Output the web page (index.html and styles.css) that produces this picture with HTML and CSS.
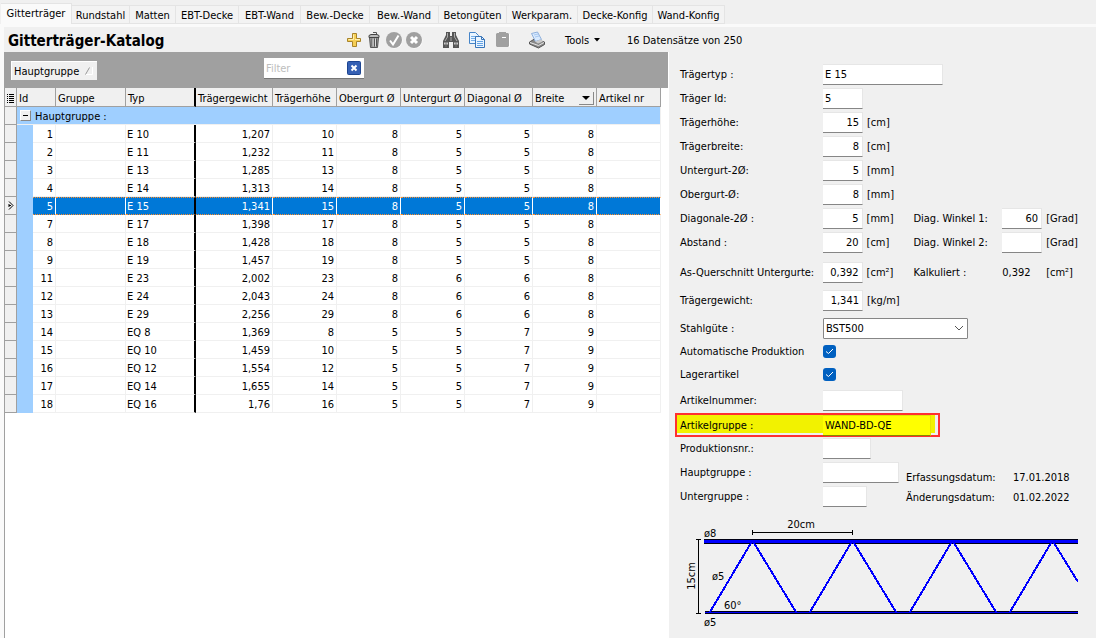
FILE: index.html
```html
<!DOCTYPE html>
<html lang="de">
<head>
<meta charset="utf-8">
<title>Gitterträger-Katalog</title>
<link rel="stylesheet" href="styles.css">
</head>
<body>
<nav class="tabs">
  <button class="tab tab-active">Gitterträger</button>
  <button class="tab w-58">Rundstahl</button>
  <button class="tab w-46">Matten</button>
  <button class="tab w-63">EBT-Decke</button>
  <button class="tab w-62">EBT-Wand</button>
  <button class="tab w-69">Bew.-Decke</button>
  <button class="tab w-69">Bew.-Wand</button>
  <button class="tab w-68">Betongüten</button>
  <button class="tab w-71">Werkparam.</button>
  <button class="tab w-75">Decke-Konfig</button>
  <button class="tab w-72">Wand-Konfig</button>
</nav>
<div class="page">
  <header class="toolbar">
    <h1 class="title">Gitterträger-Katalog</h1>
    <div class="tools">
      <button class="icon" aria-label="Neu"><svg width="16" height="16" viewBox="0 0 16 16"><path d="M6.500 1.500h4v5h4v3h-4v5h-4v-5H1.500v-3h5z" fill="#f6cf55" stroke="#a8842a"/><path d="M7.500 2.500v5h-5M9 7.500h5" fill="none" stroke="#fff0b0"/></svg></button>
      <button class="icon" aria-label="Löschen"><svg width="16" height="16" viewBox="0 0 16 16"><path d="M7 .5h3.500v2" fill="none" stroke="#555"/><path d="M3.500 5.500h9l-1 10h-7z" fill="#999" stroke="#555"/><path d="M3 3.500l2-1h6l2 1v2H3z" fill="#bbb" stroke="#444"/><path d="M6 6.500v8M8.500 6.500v8M10.500 6.500v8" stroke="#555"/><path d="M7 6.500v8M9.500 6.500v8" stroke="#ddd"/></svg></button>
      <button class="icon" aria-label="Speichern"><svg width="18" height="18" viewBox="0 0 18 18"><circle cx="9.500" cy="9.500" r="8" fill="#fff"/><circle cx="9" cy="9" r="8" fill="#a0a0a0"/><path d="M5 9.500l3 4 5.500-9" fill="none" stroke="#fff" stroke-width="2"/></svg></button>
      <button class="icon" aria-label="Abbrechen"><svg width="18" height="18" viewBox="0 0 18 18"><circle cx="9.500" cy="9.500" r="8" fill="#fff"/><circle cx="9" cy="9" r="8" fill="#a0a0a0"/><path d="M6 6l6 6M12 6l-6 6" fill="none" stroke="#fff" stroke-width="3"/></svg></button>
      <button class="icon icon-find" aria-label="Suchen"><svg width="18" height="16" viewBox="0 0 18 16"><path d="M4 0h4v4h2V0h4v3l3 6v7h-6v-6H7v6H1V9l3-6z" fill="#555"/><path d="M5.500 1v4L3 9M12.500 1v4l2.500 4M8 6h2M8 8h2" fill="none" stroke="#aaa"/><path d="M2 11.500h4M12 11.500h4" stroke="#ccc" stroke-width="2"/><path d="M4 10v5M14 10v5" stroke="#777"/></svg></button>
      <button class="icon icon-copy" aria-label="Kopieren"><svg width="18" height="18" viewBox="0 0 18 18"><path d="M1.500 1.500h6l3 3v8h-9z" fill="#eaf5ff" stroke="#4584c8"/><path d="M3 5.500h5M3 7.500h5M3 9.500h5" stroke="#74aee8"/><path d="M7.500 5.500h6l3 3v8h-9z" fill="#eaf5ff" stroke="#3874b8"/><path d="M13.500 5.500v3h3" fill="none" stroke="#3874b8"/><path d="M9 10.500h6M9 12.500h6M9 14.500h6" stroke="#64a2e4"/></svg></button>
      <button class="icon icon-paste" aria-label="Einfügen"><svg width="16" height="17" viewBox="0 0 16 17"><path d="M2 3h3V1h6v2h4v13H2z" fill="#fff"/><path d="M1 3l1-1h2V1h7v1h2l1 1v12l-1 1H2l-1-1z" fill="#a0a0a0"/><path d="M7 6.500h4" stroke="#fff"/></svg></button>
      <button class="icon icon-print" aria-label="Drucken"><svg width="18" height="18" viewBox="0 0 18 18"><path d="M1.500 11l5-3 10 3v2.500l-6 3.500-9-4z" fill="#888" stroke="#555"/><path d="M3.500 2.500l6-1.500 4 7.500-6 2z" fill="#d8eaff" stroke="#8fb0dc"/><path d="M2 11.500l8.500 3 5.500-3" fill="none" stroke="#e8e8e8"/><path d="M7 10.500l6-2 2 2-5 2z" fill="#ccc"/><path d="M6 4l4-1M7 6l4-1" stroke="#a8c8f0"/></svg></button>
      <button class="menu">Tools <svg width="6" height="4" viewBox="0 0 6 4"><path d="M0 0h6L3 3.500z"/></svg></button>
      <span class="count">16 Datensätze von 250</span>
    </div>
  </header>
  <main class="main">
    <section class="catalog">
      <div class="groupbar">
        <button class="chip">Hauptgruppe <svg width="8" height="8" viewBox="0 0 8 8"><path d="M7.500 0v7.500H1" fill="none" stroke="#fff"/><path d="M.5 7.500L4.500.5" stroke="#999"/></svg></button>
        <div class="filter">
          <input class="filter-input" type="text" placeholder="Filter" aria-label="Filter">
          <button class="filter-clear" aria-label="Filter löschen"><svg width="14" height="14" viewBox="0 0 14 14"><rect x=".5" y=".5" width="13" height="13" rx="1" fill="#3560b4" stroke="#1c4490"/><path d="M4.500 4.500l5 5M9.500 4.500l-5 5" stroke="#fff" stroke-width="2"/></svg></button>
        </div>
      </div>
      <table class="grid">
        <colgroup><col class="c-mark"><col class="c-indent"><col class="c-id"><col class="c-70"><col class="c-70"><col class="c-77"><col class="c-64"><col class="c-64"><col class="c-64"><col class="c-68"><col class="c-64"><col class="c-64"></colgroup>
        <thead><tr><th><svg width="7" height="9" viewBox="0 0 7 9"><path d="M0 .5h1M2 .5h5M0 2.500h1M2 2.500h5M0 4.500h1M2 4.500h5M0 6.500h1M2 6.500h5M0 8.500h1M2 8.500h5" stroke="#000"/></svg></th><th colspan="2">Id</th><th>Gruppe</th><th class="frozen">Typ</th><th>Trägergewicht</th><th>Trägerhöhe</th><th>Obergurt Ø</th><th>Untergurt Ø</th><th>Diagonal Ø</th><th><div class="th-drop">Breite<button class="drop" aria-label="Breite filtern"><svg width="8" height="4" viewBox="0 0 8 4"><path d="M0 0h8L4 4z"/></svg></button></div></th><th>Artikel nr</th></tr></thead>
        <tbody>
        <tr class="group"><td class="mark"></td><td colspan="11"><button class="toggle" aria-label="Gruppe zuklappen"><svg width="5" height="1" viewBox="0 0 5 1"><path d="M0 0h5v1H0z"/></svg></button><span class="group-name">Hauptgruppe :</span></td></tr>
        <tr><td class="mark"></td><td class="indent"></td><td>1</td><td></td><td class="typ">E 10</td><td>1,207</td><td>10</td><td>8</td><td>5</td><td>5</td><td>8</td><td></td></tr>
        <tr><td class="mark"></td><td class="indent"></td><td>2</td><td></td><td class="typ">E 11</td><td>1,232</td><td>11</td><td>8</td><td>5</td><td>5</td><td>8</td><td></td></tr>
        <tr><td class="mark"></td><td class="indent"></td><td>3</td><td></td><td class="typ">E 13</td><td>1,285</td><td>13</td><td>8</td><td>5</td><td>5</td><td>8</td><td></td></tr>
        <tr><td class="mark"></td><td class="indent"></td><td>4</td><td></td><td class="typ">E 14</td><td>1,313</td><td>14</td><td>8</td><td>5</td><td>5</td><td>8</td><td></td></tr>
        <tr class="selected"><td class="mark"><svg width="6" height="9" viewBox="0 0 6 9"><path d="M1 .5l4 4-4 4M1 3v3M1 4.500h2" fill="none" stroke="#000"/></svg></td><td class="indent"></td><td>5</td><td></td><td class="typ">E 15</td><td>1,341</td><td>15</td><td>8</td><td>5</td><td>5</td><td>8</td><td></td></tr>
        <tr><td class="mark"></td><td class="indent"></td><td>7</td><td></td><td class="typ">E 17</td><td>1,398</td><td>17</td><td>8</td><td>5</td><td>5</td><td>8</td><td></td></tr>
        <tr><td class="mark"></td><td class="indent"></td><td>8</td><td></td><td class="typ">E 18</td><td>1,428</td><td>18</td><td>8</td><td>5</td><td>5</td><td>8</td><td></td></tr>
        <tr><td class="mark"></td><td class="indent"></td><td>9</td><td></td><td class="typ">E 19</td><td>1,457</td><td>19</td><td>8</td><td>5</td><td>5</td><td>8</td><td></td></tr>
        <tr><td class="mark"></td><td class="indent"></td><td>11</td><td></td><td class="typ">E 23</td><td>2,002</td><td>23</td><td>8</td><td>6</td><td>6</td><td>8</td><td></td></tr>
        <tr><td class="mark"></td><td class="indent"></td><td>12</td><td></td><td class="typ">E 24</td><td>2,043</td><td>24</td><td>8</td><td>6</td><td>6</td><td>8</td><td></td></tr>
        <tr><td class="mark"></td><td class="indent"></td><td>13</td><td></td><td class="typ">E 29</td><td>2,256</td><td>29</td><td>8</td><td>6</td><td>6</td><td>8</td><td></td></tr>
        <tr><td class="mark"></td><td class="indent"></td><td>14</td><td></td><td class="typ">EQ 8</td><td>1,369</td><td>8</td><td>5</td><td>5</td><td>7</td><td>9</td><td></td></tr>
        <tr><td class="mark"></td><td class="indent"></td><td>15</td><td></td><td class="typ">EQ 10</td><td>1,459</td><td>10</td><td>5</td><td>5</td><td>7</td><td>9</td><td></td></tr>
        <tr><td class="mark"></td><td class="indent"></td><td>16</td><td></td><td class="typ">EQ 12</td><td>1,554</td><td>12</td><td>5</td><td>5</td><td>7</td><td>9</td><td></td></tr>
        <tr><td class="mark"></td><td class="indent"></td><td>17</td><td></td><td class="typ">EQ 14</td><td>1,655</td><td>14</td><td>5</td><td>5</td><td>7</td><td>9</td><td></td></tr>
        <tr><td class="mark"></td><td class="indent"></td><td>18</td><td></td><td class="typ">EQ 16</td><td>1,76</td><td>16</td><td>5</td><td>5</td><td>7</td><td>9</td><td></td></tr>
        </tbody>
      </table>
    </section>
    <form class="detail">
      <div class="row"><label class="label" for="typ">Trägertyp :</label><input class="field f-120" id="typ" value="E 15"></div>
      <div class="row"><label class="label" for="tid">Träger Id:</label><input class="field" id="tid" value="5"></div>
      <div class="row"><label class="label" for="hoehe">Trägerhöhe:</label><input class="field num" id="hoehe" value="15"><span class="unit">[cm]</span></div>
      <div class="row"><label class="label" for="breite">Trägerbreite:</label><input class="field num" id="breite" value="8"><span class="unit">[cm]</span></div>
      <div class="row"><label class="label" for="unter">Untergurt-2Ø:</label><input class="field num" id="unter" value="5"><span class="unit">[mm]</span></div>
      <div class="row"><label class="label" for="ober">Obergurt-Ø:</label><input class="field num" id="ober" value="8"><span class="unit">[mm]</span></div>
      <div class="row"><label class="label" for="diag">Diagonale-2Ø :</label><input class="field num" id="diag" value="5"><span class="unit">[mm]</span><label class="label2" for="w1">Diag. Winkel 1:</label><input class="field num" id="w1" value="60"><span class="unit">[Grad]</span></div>
      <div class="row"><label class="label" for="abstand">Abstand :</label><input class="field num" id="abstand" value="20"><span class="unit">[cm]</span><label class="label2" for="w2">Diag. Winkel 2:</label><input class="field num" id="w2" value=""><span class="unit">[Grad]</span></div>
      <div class="row row-section"><label class="label" for="as">As-Querschnitt Untergurte:</label><input class="field num" id="as" value="0,392"><span class="unit">[cm²]</span><span class="label2">Kalkuliert :</span><output class="calc">0,392</output><span class="unit">[cm²]</span></div>
      <div class="row row-spaced"><label class="label" for="gew">Trägergewicht:</label><input class="field num" id="gew" value="1,341"><span class="unit">[kg/m]</span></div>
      <div class="row row-spaced"><label class="label" for="stahl">Stahlgüte :</label><select class="select" id="stahl"><option>BST500</option></select></div>
      <div class="row row-check"><label class="label" for="auto">Automatische Produktion</label><input class="check" type="checkbox" id="auto" checked></div>
      <div class="row row-check"><label class="label" for="lager">Lagerartikel</label><input class="check" type="checkbox" id="lager" checked></div>
      <div class="row row-article"><label class="label" for="artnr">Artikelnummer:</label><input class="field f-80" id="artnr"></div>
      <div class="row row-marked"><label class="label" for="artgr">Artikelgruppe :</label><input class="field f-108" id="artgr" value="WAND-BD-QE"></div>
      <div class="row"><label class="label" for="prod">Produktionsnr.:</label><input class="field f-48" id="prod"></div>
      <div class="foot">
        <div class="foot-fields">
          <div class="row"><label class="label" for="hg">Hauptgruppe :</label><input class="field f-76" id="hg"></div>
          <div class="row"><label class="label" for="ug">Untergruppe :</label><input class="field f-44" id="ug"></div>
        </div>
        <dl class="dates"><dt>Erfassungsdatum:</dt><dd>17.01.2018</dd><dt>Änderungsdatum:</dt><dd>01.02.2022</dd></dl>
      </div>
      <svg class="truss" viewBox="680 514 398 116" width="398" height="116" role="img" aria-label="Gitterträger">
        <g stroke="#000" shape-rendering="crispEdges"><path d="M752.500 532.500h100M752.500 530v5M852.500 530v5M698.500 539v74M696 539.500h5M696 613.500h5" fill="none"/></g>
        <path d="M704 539h374v5H704zM705 611h373v3H705z" fill="#000014"/>
        <path d="M704 540h374v3H704z" fill="#00f"/><path d="M705 612h373v1H705z" fill="#00f"/>
        <path d="M710 612L751 543M754 543l42 69M810 612L851 543M854 543l42 69M910 612L951 543M954 543l42 69M1010 612L1051 543M1054 543l24 39" fill="none" stroke="#00f" stroke-width="2" shape-rendering="crispEdges"/>
        <g class="truss-text"><text x="801" y="528" text-anchor="middle">20cm</text><text x="704" y="537">ø8</text><text x="712" y="580">ø5</text><text x="724" y="609">60°</text><text x="704" y="626">ø5</text><text transform="translate(695 576) rotate(-90)" text-anchor="middle">15cm</text></g>
      </svg>
    </form>
  </main>
</div>
</body>
</html>
```
FILE: styles.css
```css
* { box-sizing: border-box; }
body {
  margin: 0;
  min-height: 100vh;
  display: flex;
  flex-direction: column;
  background: #f0f0f0;
  color: #000;
  font: 11px/15px "DejaVu Sans Condensed", "DejaVu Sans", sans-serif;
}
button, input, select { font: inherit; color: inherit; border-radius: 0; }
button { padding: 0; border: 0; background: none; white-space: nowrap; }

.tabs { display: flex; align-items: flex-end; height: 24px; padding-left: 1px; }
.tab { height: 19px; padding-top: 1px; background: #f3f3f3; border: solid #e4e4e4; border-width: 1px 1px 1px 0; }
.tab-active { width: 71px; height: 21px; padding: 0 0 1px; background: #fafafa; border-bottom: 0; }
.w-46 { width: 46px; }
.w-58 { width: 58px; }
.w-62 { width: 62px; }
.w-63 { width: 63px; }
.w-68 { width: 68px; }
.w-69 { width: 69px; }
.w-71 { width: 71px; }
.w-72 { width: 72px; }
.w-75 { width: 75px; }

.page { flex: 1; display: flex; flex-direction: column; border: solid #fafafa; border-width: 3px 0 0 4px; }
.toolbar { display: flex; align-items: center; height: 25px; padding-left: 4px; }
.title { margin: 0; padding-top: 2px; width: 336px; font-size: 15px; line-height: 20px; font-weight: bold; }
.tools { display: flex; align-items: center; }
.icon { display: flex; align-items: center; justify-content: center; width: 20px; height: 20px; }
.icon-find { margin-left: 17px; }
.icon-copy { margin-left: 6px; }
.icon-paste { margin-left: 6px; }
.icon-print { margin-left: 14px; }
.menu { display: flex; align-items: center; gap: 5px; width: 62px; margin-left: 18px; padding-top: 1px; }
.count { padding-top: 1px; white-space: nowrap; }

.main { flex: 1; display: grid; grid-template-columns: minmax(0, 664fr) minmax(0, 428fr); }
.catalog { background: #fff; border-left: 1px solid #a0a0a0; }
.groupbar { display: flex; align-items: flex-start; height: 36px; padding: 6px; background: #a0a0a0; }
.chip { display: flex; align-items: center; gap: 6px; width: 86px; height: 19px; margin-top: 3px; padding-left: 2px; background: #f0f0f0; border: solid #fff; border-width: 1px 0 0 1px; }
.filter { display: flex; align-items: center; width: 100px; height: 21px; margin-left: 167px; padding-right: 3px; background: #fff; border-bottom: 1px solid #777; }
.filter-input { flex: 1; min-width: 0; padding: 0 2px; border: 0; background: none; }
.filter-input::placeholder { color: #bdbdbd; }
.filter-clear { display: flex; }

.grid { width: 656px; table-layout: fixed; border-collapse: separate; border-spacing: 0; }
.c-mark { width: 12px; }
.c-indent { width: 16px; }
.c-id { width: 23px; }
.c-64 { width: 64px; }
.c-68 { width: 68px; }
.c-70 { width: 70px; }
.c-77 { width: 77px; }
.grid th { height: 19px; padding: 2px 0 0 2px; font-weight: normal; text-align: left; white-space: nowrap; background: #f0f0f0; border: solid #a0a0a0; border-width: 0 1px 1px 0; }
.grid td { height: 18px; padding: 1px 2px 0 0; text-align: right; white-space: nowrap; border: solid #f0f0f0; border-width: 0 1px 1px 0; }
.grid th svg { display: block; }
.grid .frozen, .grid td.typ { border-right: 2px solid #000; }
.grid td.typ { padding-left: 1px; text-align: left; }
.th-drop { display: flex; align-items: center; justify-content: space-between; height: 15px; }
.drop { display: flex; align-items: center; justify-content: center; width: 15px; height: 13px; margin-right: 2px; border: solid #888; border-width: 0 1px 1px 0; }
.grid td.mark { padding: 0 0 0 3px; background: #f0f0f0; border-color: #a0a0a0; }
.mark svg { display: block; }
.grid td.indent { background: #9fcfff; border-color: #9fcfff; }
.grid .group td { padding: 0; text-align: left; background: #9fcfff; }
.grid .group td.mark { background: #f0f0f0; }
.toggle { display: inline-flex; align-items: center; justify-content: center; width: 11px; height: 11px; margin: 0 4px 0 3px; background: #f0f0f0; border: 1px solid #fff; border-right-color: #888; border-bottom-color: #888; vertical-align: middle; }
.group-name { vertical-align: middle; }
.grid .selected td:nth-child(n+3) { padding-top: 0; color: #fff; background: #0078d7; border-top: 1px dotted #ff8c28; border-bottom: 1px dotted #ff8c28; border-right-color: #fff; }
.grid .selected td.typ { border-right-color: #000; }

.detail { padding: 10px 4px 0 11px; border-left: 1px solid #fff; }
.row { display: flex; align-items: center; height: 24px; white-space: nowrap; }
.row-section { margin-top: 6px; }
.row-spaced { margin-top: 4px; }
.row-check { height: 23px; }
.row-article { margin-top: 2px; }
.label { width: 143px; }
.field { width: 40px; height: 21px; padding: 0 2px; background: #fff; border: solid #e6e6e6; border-width: 1px 1px 1px 0; border-bottom-color: #868686; }
.num { padding-right: 3px; text-align: right; }
.f-120 { width: 120px; }
.f-108 { width: 108px; }
.f-80 { width: 80px; }
.f-76 { width: 76px; }
.f-48 { width: 48px; }
.f-44 { width: 44px; }
.unit { width: 50px; padding-left: 4px; }
.label2 { width: 90px; padding-left: 1px; }
.calc { width: 40px; }
.select {
  width: 145px; height: 21px; padding: 0 2px; border: 1px solid #868686; border-radius: 1px; appearance: none;
  background: #fff url("data:image/svg+xml,%3Csvg xmlns='http://www.w3.org/2000/svg' width='10' height='6'%3E%3Cpath d='M1 1l4 4 4-4' fill='none' stroke='%23555'/%3E%3C/svg%3E") no-repeat right 3px center;
}
.check {
  width: 13px; height: 13px; margin: 0; appearance: none; border-radius: 3px;
  background: #0060c0 url("data:image/svg+xml,%3Csvg xmlns='http://www.w3.org/2000/svg' width='9' height='7'%3E%3Cpath d='M1 3.500l2.500 2L8 1' fill='none' stroke='%23fff'/%3E%3C/svg%3E") no-repeat center;
}
.row-marked { width: 265px; margin: 1px 0 -1px -5px; padding-left: 3px; border: 2px solid #ff3030; background: linear-gradient(#f2f200, #f2f200) no-repeat 0 0 / 258px 18px; }
.row-marked .field { background: #ff0; border-color: #e6e600; border-bottom-color: #868600; }
.foot { display: flex; justify-content: space-between; gap: 4px; }
.dates { flex: 1; display: grid; grid-template-columns: 107px 1fr; grid-auto-rows: 20px; align-items: center; margin: 7px 0 0; white-space: nowrap; }
.dates dd { margin: 0; }
.foot-fields { width: 222px; }
.truss { display: block; margin-top: 6px; max-width: 100%; }
.truss-text { font-size: 11px; }
```
